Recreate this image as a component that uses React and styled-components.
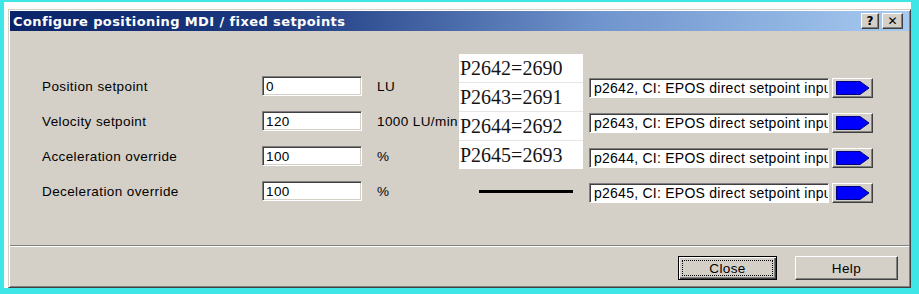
import styled, { createGlobalStyle } from 'styled-components';

const GlobalStyle = createGlobalStyle`
  body {
    margin: 0;
    background: #fff;
  }
`;

const rows = [
  { label: 'Position setpoint', value: '0', unit: 'LU', source: 'p2642' },
  { label: 'Velocity setpoint', value: '120', unit: '1000 LU/min', source: 'p2643' },
  { label: 'Acceleration override', value: '100', unit: '%', source: 'p2644' },
  { label: 'Deceleration override', value: '100', unit: '%', source: 'p2645' },
];

const notes = ['P2642=2690', 'P2643=2691', 'P2644=2692', 'P2645=2693'];

const App = () => {
  return (
    <>
      <GlobalStyle />
      <Marco>
        <Dialogo>
          <BarraTitulo>
            <Titulo>Configure positioning MDI / fixed setpoints</Titulo>
            <BotonesTitulo>
              <BotonTitulo $ancho={18}>?</BotonTitulo>
              <BotonTitulo $ancho={21}>✕</BotonTitulo>
            </BotonesTitulo>
          </BarraTitulo>

          <Cuerpo>
            <Formulario>
              {rows.map((r) => (
                <Fila key={r.source}>
                  <Etiqueta>{r.label}</Etiqueta>
                  <Entrada>{r.value}</Entrada>
                  <Unidad>{r.unit}</Unidad>
                  <Combo>{r.source}, CI: EPOS direct setpoint input</Combo>
                  <BotonFlecha>
                    <svg width="34" height="14" viewBox="0 0 34 14">
                      <polygon points="0.5,0.5 24,0.5 33,7 24,13.5 0.5,13.5" fill="#0000ff" stroke="#00007a" />
                    </svg>
                  </BotonFlecha>
                </Fila>
              ))}
            </Formulario>

            <Nota>
              {notes.map((n) => (
                <NotaFila key={n}>{n}</NotaFila>
              ))}
            </Nota>
            <Raya />

            <Separador />
            <Pie>
              <Boton $defecto>
                <Foco>Close</Foco>
              </Boton>
              <Boton>Help</Boton>
            </Pie>
          </Cuerpo>
        </Dialogo>
      </Marco>
    </>
  );
};

const Marco = styled.div`
  width: 919px;
  height: 294px;
  box-sizing: border-box;
  border-style: solid;
  border-color: #3fe6e8;
  border-width: 2px 8px 6px 4px;
  padding: 7px 0 0 4px;
  background: #fbfdfd;
  font-family: "Liberation Sans", Arial, sans-serif;
`;

const Dialogo = styled.div`
  width: 903px;
  height: 279px;
  box-sizing: border-box;
  display: flex;
  flex-direction: column;
  background: #d4d0c8;
  border: 1px solid;
  border-color: #d4d0c8 #404040 #404040 #d4d0c8;
  box-shadow: inset 1px 1px #fff, inset -1px -1px #808080;
  padding: 1px;
`;

const BarraTitulo = styled.div`
  height: 20px;
  display: flex;
  align-items: center;
  justify-content: space-between;
  background: linear-gradient(90deg, #0a246a 0%, #1d3a80 30%, #6f93cc 65%, #a6caf0 100%);
  padding-left: 3px;
`;

const Titulo = styled.span`
  color: #fff;
  font-family: "DejaVu Sans", Verdana, sans-serif;
  font-weight: bold;
  font-size: 13px;
  letter-spacing: 0.4px;
`;

const BotonesTitulo = styled.div`
  display: flex;
  gap: 3px;
  margin-right: 6px;
`;

const BotonTitulo = styled.div`
  width: ${(p) => p.$ancho}px;
  height: 16px;
  box-sizing: border-box;
  background: #d4d0c8;
  border: 1px solid;
  border-color: #fff #404040 #404040 #fff;
  box-shadow: inset -1px -1px #808080;
  display: flex;
  align-items: center;
  justify-content: center;
  font-family: "DejaVu Sans", sans-serif;
  font-weight: bold;
  font-size: 12px;
  color: #000;
`;

const Cuerpo = styled.div`
  flex: 1;
  position: relative;
  display: flex;
  flex-direction: column;
`;

const Formulario = styled.div`
  display: flex;
  flex-direction: column;
  gap: 14px;
  padding: 45px 0 0 32px;
`;

const Fila = styled.div`
  height: 21px;
  display: flex;
  align-items: flex-start;
  font-size: 13.5px;
  letter-spacing: 0.4px;
  color: #000;
`;

const Etiqueta = styled.span`
  width: 220px;
  line-height: 21px;
`;

const Entrada = styled.div`
  width: 100px;
  height: 20px;
  box-sizing: border-box;
  background: #fff;
  border: 1px solid;
  border-color: #808080 #fff #fff #808080;
  box-shadow: inset 1px 1px #404040, inset -1px -1px #d4d0c8;
  padding: 2px 0 0 3px;
  line-height: 15px;
`;

const Unidad = styled.span`
  width: 212px;
  padding-left: 15px;
  line-height: 21px;
  white-space: nowrap;
  overflow: hidden;
`;

const Combo = styled.div`
  width: 240px;
  height: 20px;
  margin-top: 2px;
  box-sizing: border-box;
  background: #fff;
  border: 1px solid;
  border-color: #808080 #fff #fff #808080;
  box-shadow: inset 1px 1px #404040;
  padding: 2px 0 0 4px;
  line-height: 15px;
  font-size: 14px;
  letter-spacing: 0.25px;
  white-space: nowrap;
  overflow: hidden;
`;

const BotonFlecha = styled.div`
  width: 41px;
  height: 20px;
  margin: 2px 0 0 3px;
  box-sizing: border-box;
  background: #d4d0c8;
  border: 1px solid;
  border-color: #fff #404040 #404040 #fff;
  box-shadow: inset -1px -1px #808080;
  display: flex;
  align-items: center;
  padding-left: 3px;
`;

const Nota = styled.div`
  position: absolute;
  left: 449px;
  top: 23px;
  width: 124px;
  height: 115px;
  background: #fff;
  display: flex;
  flex-direction: column;
`;

const NotaFila = styled.div`
  flex: 1;
  border-bottom: 1px solid #e6e6e6;
  font-family: "Liberation Serif", "Times New Roman", serif;
  font-size: 20px;
  line-height: 28px;
  color: #151515;
  padding-left: 1px;

  &:last-child {
    border-bottom: none;
  }
`;

const Raya = styled.div`
  position: absolute;
  left: 469px;
  top: 159px;
  width: 94px;
  height: 3px;
  background: #000;
`;

const Separador = styled.div`
  margin-top: auto;
  height: 1px;
  background: #808080;
  border-bottom: 1px solid #fff;
`;

const Pie = styled.div`
  display: flex;
  justify-content: flex-end;
  gap: 18px;
  padding: 9px 11px 6px 0;
`;

const Boton = styled.div`
  width: ${(p) => (p.$defecto ? 99 : 103)}px;
  height: 24px;
  box-sizing: border-box;
  background: #d4d0c8;
  border: 1px solid;
  border-color: ${(p) => (p.$defecto ? '#000' : '#fff #404040 #404040 #fff')};
  box-shadow: ${(p) =>
    p.$defecto
      ? 'inset 1px 1px #fff, inset -1px -1px #404040, inset -2px -2px #808080'
      : 'inset -1px -1px #808080'};
  display: flex;
  align-items: center;
  justify-content: center;
  font-size: 13.5px;
  letter-spacing: 0.4px;
  color: #000;
  padding: ${(p) => (p.$defecto ? '3px' : '0')};
`;

const Foco = styled.span`
  flex: 1;
  align-self: stretch;
  display: flex;
  align-items: center;
  justify-content: center;
  border: 1px dotted #000;
`;

export default App;
